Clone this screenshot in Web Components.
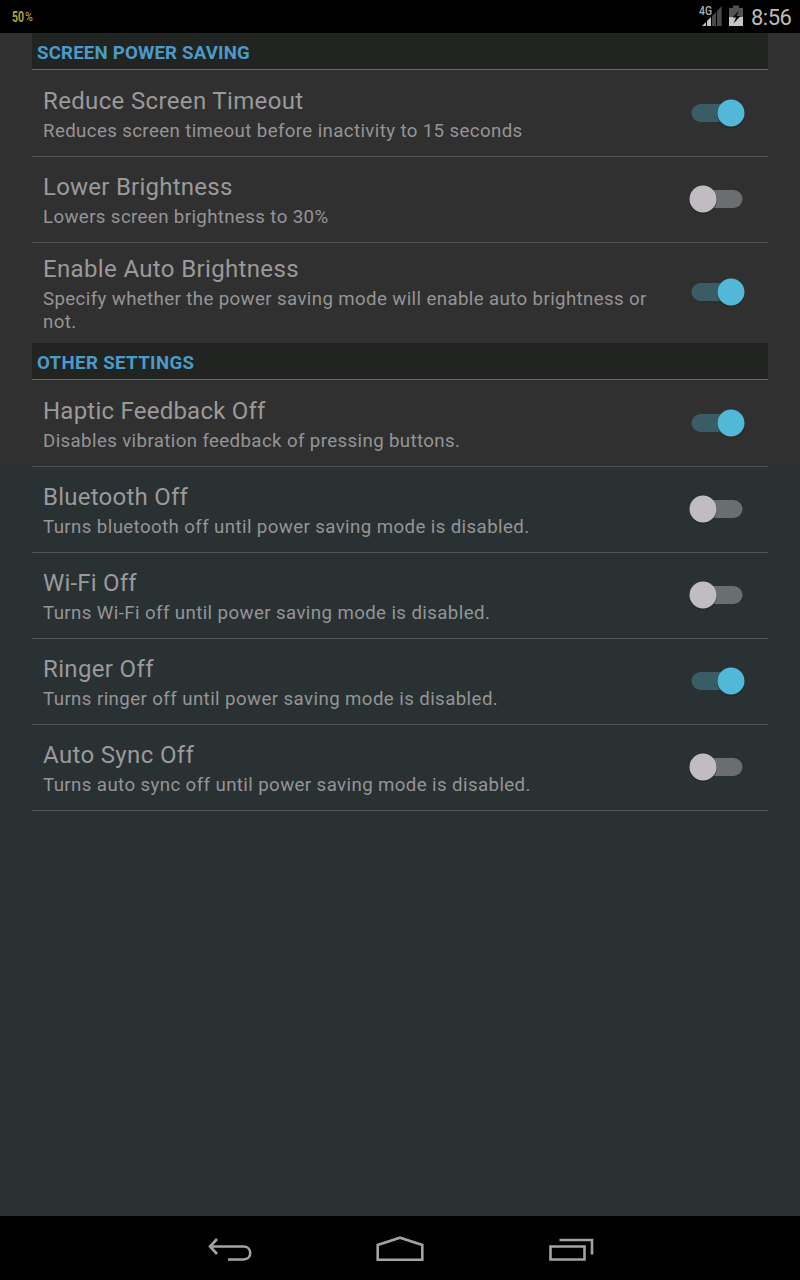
<!DOCTYPE html>
<html lang="en"><head><meta charset="utf-8"><title>Power saving</title>
<style>html,body{margin:0;height:100%;overflow:hidden;background:#000}</style></head><body>
<power-screen></power-screen>
<script>
const define=(name,html,setup)=>customElements.define(name,class extends HTMLElement{
  constructor(){super();const t=document.createElement('template');t.innerHTML=html;
    this.attachShadow({mode:'open'}).append(t.content.cloneNode(true));}
  connectedCallback(){if(setup)setup(this,this.shadowRoot);}
});
define('status-bar',`<style>
:host{display:flex;height:33px;box-sizing:border-box;background:#000;align-items:center;padding:0 8px 0 12px}
.pct{font:700 15.5px/20px Roboto,sans-serif;color:#b3a335;display:flex;margin-top:2px;width:24px}
.pct span{display:inline-block;transform:scaleX(.68);transform-origin:0 50%;white-space:nowrap}
.pct small{display:inline-block;font-size:12.5px;font-weight:500;margin-left:1.5px;position:relative;top:-1px;transform:scaleX(1.25);transform-origin:0 50%}
svg{display:block;margin-left:auto}
.time{font:400 22px/33px Roboto,sans-serif;color:#bcbcbc;margin-left:7px;padding-top:2px;width:41px;white-space:nowrap;letter-spacing:-.5px}
</style><div class="pct"><span>50<small>%</small></span></div>
<svg width="46" height="33" viewBox="698 0 46 33">
<path d="M712 16L716 12V26H712ZM717 11L721.7 6V26H717Z" fill="#454a48"/><path d="M702 26L706 22V26ZM707 21L711 17V26H707Z" fill="#c4c4c4"/>
<text x="699" y="15" textLength="13" lengthAdjust="spacingAndGlyphs" font-family="Roboto" font-weight="500" font-size="12.5" fill="#b0b0b0">4G</text>
<path d="M733 5.5h6V8h4v9h-14V8h4z" fill="#505553"/><path d="M729 17h14v9h-14z" fill="#c6c6c6"/><path d="M739 10.5l-6.500 7h3.500l-2.500 6 7-7.500h-4z" fill="#080808"/>
</svg><div class="time">8:56</div>`);
define('section-heading',`<style>
:host{display:block;height:36px;background:#222422;border-bottom:1px solid #686b6a;margin-bottom:1px;padding-left:5px;font:700 18.67px/40px Roboto,sans-serif;letter-spacing:.18px;color:#4a9bc8;white-space:nowrap}
:host([wide]){letter-spacing:.36px}
</style><slot></slot>`);
define('toggle-switch',`<style>
:host{display:block;width:60px;height:34px}svg{display:block}.on{display:none}:host([on]) .on{display:block}:host([on]) .off{display:none}
</style><svg width="60" height="34" viewBox="0 0 60 34">
<g class="on"><rect x="5.5" y="8" width="45" height="18" rx="9" fill="#3a5c65"/><circle cx="45" cy="18" r="14" fill="#222" opacity=".45"/><circle cx="45" cy="17" r="13.5" fill="#52b8d8"/></g>
<g class="off"><rect x="10" y="8" width="46.5" height="18" rx="9" fill="#6b6e71"/><circle cx="17" cy="18" r="14" fill="#222" opacity=".45"/><circle cx="17" cy="17" r="13.5" fill="#c1bcc0"/></g></svg>`);
define('setting-row',`<style>
:host{display:flex;height:85px;align-items:center;border-bottom:1px solid #515454;padding:0 22px 0 11px}
:host([tall]){height:100px;border:0}
.copy{flex:1;min-width:0;padding-top:3px}
.title{font:400 24px/29px Roboto,sans-serif;letter-spacing:var(--ts,.35px);color:#9b999b}
.note{font:400 18.67px/23px Roboto,sans-serif;letter-spacing:var(--ns,.385px);color:#969496;margin-top:4px}
toggle-switch{margin:0 0 2px 20px;flex:none}
</style><div class="copy"><div class="title"></div><div class="note"><slot></slot></div></div><toggle-switch></toggle-switch>`,
(h,r)=>{r.querySelector('.title').textContent=h.getAttribute('name');r.querySelector('toggle-switch').toggleAttribute('on',h.hasAttribute('on'));});
define('nav-bar',`<style>:host{display:flex;height:64px;background:#000}svg{display:block}</style>
<svg width="800" height="64" viewBox="0 1216 800 64" fill="none" stroke="#a3a3a3" stroke-width="2.6">
<path d="M210 1246.500H243.500C252.500 1246.500 252.500 1259.500 243.500 1259.500H228M217 1239L210 1246.500L217 1254"/>
<path d="M377.700 1259.700V1245L400 1237.700L422.300 1245V1259.700Z"/>
<path d="M550.500 1246.500H584.500V1259.500H550.500ZM559.500 1240H592V1254.500"/></svg>`);
define('power-screen',`<style>
:host{display:flex;flex-direction:column;height:1280px;width:800px}
main{flex:1;padding:0 32px;background:linear-gradient(#303030 0,#303030 425px,#293133 450px,#293133 100%)}
</style><status-bar></status-bar><main>
<section-heading>SCREEN POWER SAVING</section-heading>
<setting-row on name="Reduce Screen Timeout">Reduces screen timeout before inactivity to 15 seconds</setting-row>
<setting-row name="Lower Brightness" style="--ts:.24px">Lowers screen brightness to 30%</setting-row>
<setting-row on tall name="Enable Auto Brightness">Specify whether the power saving mode will enable auto brightness or not.</setting-row>
<section-heading wide>OTHER SETTINGS</section-heading>
<setting-row on name="Haptic Feedback Off" style="--ts:.23px">Disables vibration feedback of pressing buttons.</setting-row>
<setting-row name="Bluetooth Off" style="--ts:.24px;--ns:.4px">Turns bluetooth off until power saving mode is disabled.</setting-row>
<setting-row name="Wi-Fi Off" style="--ts:.2px;--ns:.4px">Turns Wi-Fi off until power saving mode is disabled.</setting-row>
<setting-row on name="Ringer Off" style="--ns:.415px">Turns ringer off until power saving mode is disabled.</setting-row>
<setting-row name="Auto Sync Off" style="--ns:.4px">Turns auto sync off until power saving mode is disabled.</setting-row>
</main><nav-bar></nav-bar>`);
</script></body></html>
